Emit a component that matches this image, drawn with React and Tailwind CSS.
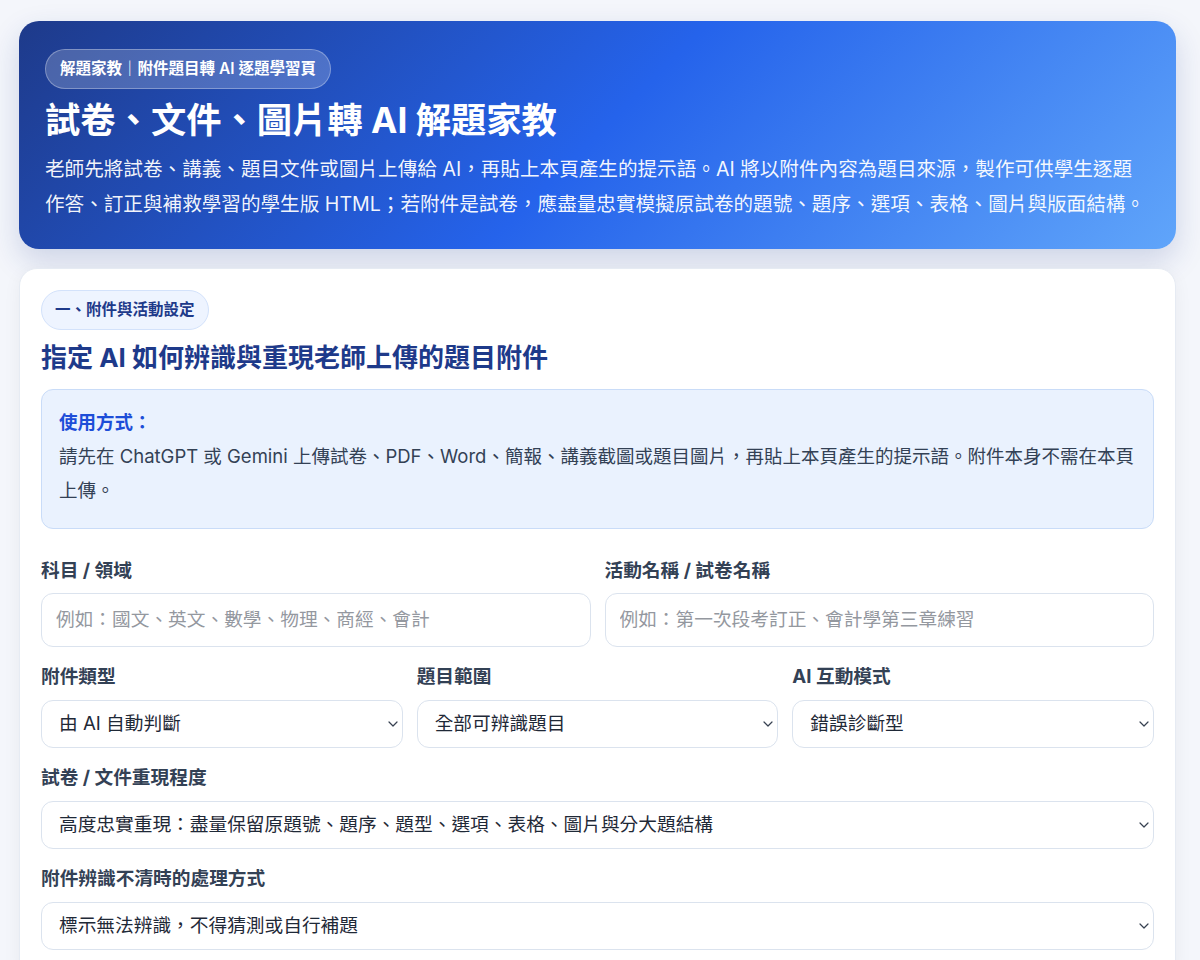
import { useState } from 'react';

const fieldLabel = 'block text-[18.7px] leading-6 font-bold text-[#334155]';

function Chevron() {
  return (
    <svg
      width="10"
      height="6"
      viewBox="0 0 10 6"
      fill="none"
      className="pointer-events-none absolute right-[5px] top-1/2 -translate-y-1/2"
    >
      <path d="M1 1l4 4 4-4" stroke="#374151" strokeWidth="1.2" strokeLinecap="round" strokeLinejoin="round" />
    </svg>
  );
}

function SelectField({ label, value, onChange, options }) {
  return (
    <div>
      <label className={`${fieldLabel} mb-[11px]`}>{label}</label>
      <div className="relative">
        <select
          value={value}
          onChange={(e) => onChange(e.target.value)}
          className="block w-full h-12 appearance-none rounded-xl border border-[#dbe3ee] bg-white pl-[17px] pr-8 text-[18.7px] text-[#1f2937] outline-none focus:border-blue-400"
        >
          {options.map((opt) => (
            <option key={opt} value={opt}>
              {opt}
            </option>
          ))}
        </select>
        <Chevron />
      </div>
    </div>
  );
}

function TextField({ label, placeholder, value, onChange }) {
  return (
    <div>
      <label className={`${fieldLabel} mb-[10px]`}>{label}</label>
      <input
        type="text"
        value={value}
        placeholder={placeholder}
        onChange={(e) => onChange(e.target.value)}
        className="block w-full h-[54px] rounded-xl border border-[#dbe3ee] bg-white px-[14px] text-[18.7px] text-[#1f2937] placeholder:text-[#94989f] outline-none focus:border-blue-400"
      />
    </div>
  );
}

export default function App() {
  const [subject, setSubject] = useState('');
  const [activity, setActivity] = useState('');
  const [fileType, setFileType] = useState('由 AI 自動判斷');
  const [scope, setScope] = useState('全部可辨識題目');
  const [mode, setMode] = useState('錯誤診斷型');
  const [fidelity, setFidelity] = useState('高度忠實重現：盡量保留原題號、題序、題型、選項、表格、圖片與分大題結構');
  const [unclear, setUnclear] = useState('標示無法辨識，不得猜測或自行補題');

  return (
    <div className="min-h-screen bg-[#f4f6fb] pl-[19px] pr-[24px] pt-[21px] pb-10 font-['Inter','Noto_Sans_CJK_TC',sans-serif]">
      {/* 頁首 */}
      <header className="rounded-[20px] bg-[linear-gradient(135deg,#1e3a8a,#2563eb_50%,#60a5fa)] pl-[26px] pr-[30px] pt-[28px] pb-[27px] text-white shadow-[0_12px_30px_rgba(30,58,138,0.18)]">
        <span className="inline-flex h-10 items-center rounded-full border border-white/30 bg-white/20 px-[14px] text-[15.5px] font-semibold">
          解題家教｜附件題目轉 AI 逐題學習頁
        </span>
        <h1 className="mt-[9px] text-[35.3px] font-bold leading-[1.3]">試卷、文件、圖片轉 AI 解題家教</h1>
        <p className="mt-[8px] text-[19.6px] leading-[35px] text-white/95">
          老師先將試卷、講義、題目文件或圖片上傳給 AI，再貼上本頁產生的提示語。AI 將以附件內容為題目來源，製作可供學生逐題作答、訂正與補救學習的學生版 HTML；若附件是試卷，應盡量忠實模擬原試卷的題號、題序、選項、表格、圖片與版面結構。
        </p>
      </header>

      {/* 一、附件與活動設定 */}
      <section className="mt-[19px] rounded-[18px] border border-[#e6ebf3] bg-white px-[21px] pt-[21px] pb-8 shadow-[0_4px_18px_rgba(15,23,42,0.05)]">
        <span className="inline-flex h-10 items-center rounded-full border border-[#d3e2fb] bg-[#eef4ff] px-[13px] text-[15.5px] font-bold text-[#1e3a8a]">
          一、附件與活動設定
        </span>
        <h2 className="mt-[10px] text-[26px] font-bold leading-[35px] text-[#1e3a8a]">
          指定 AI 如何辨識與重現老師上傳的題目附件
        </h2>

        <div className="mt-[14px] rounded-xl border border-[#c9dcf8] bg-[#eaf2fe] pl-[17px] pr-[14px] pt-[15px] pb-[21px] text-[18.5px] leading-[34px]">
          <p className="font-bold text-[#1d4ed8]">使用方式：</p>
          <p className="text-[#334155]">
            請先在 ChatGPT 或 Gemini 上傳試卷、PDF、Word、簡報、講義截圖或題目圖片，再貼上本頁產生的提示語。附件本身不需在本頁上傳。
          </p>
        </div>

        <div className="mt-[30px] grid grid-cols-2 gap-[14px]">
          <TextField
            label="科目 / 領域"
            placeholder="例如：國文、英文、數學、物理、商經、會計"
            value={subject}
            onChange={setSubject}
          />
          <TextField
            label="活動名稱 / 試卷名稱"
            placeholder="例如：第一次段考訂正、會計學第三章練習"
            value={activity}
            onChange={setActivity}
          />
        </div>

        <div className="mt-[18px] grid grid-cols-3 gap-[14px]">
          <SelectField
            label="附件類型"
            value={fileType}
            onChange={setFileType}
            options={['由 AI 自動判斷', '紙本試卷掃描', 'PDF 文件', 'Word 文件', '簡報', '講義截圖', '題目圖片']}
          />
          <SelectField
            label="題目範圍"
            value={scope}
            onChange={setScope}
            options={['全部可辨識題目', '只處理選擇題', '只處理非選擇題', '指定題號']}
          />
          <SelectField
            label="AI 互動模式"
            value={mode}
            onChange={setMode}
            options={['錯誤診斷型', '逐步引導型', '直接講解型']}
          />
        </div>

        <div className="mt-[18px] space-y-[18px]">
          <SelectField
            label="試卷 / 文件重現程度"
            value={fidelity}
            onChange={setFidelity}
            options={[
              '高度忠實重現：盡量保留原題號、題序、題型、選項、表格、圖片與分大題結構',
              '中度重現：保留題號與題目內容，版面可重新整理',
              '僅取題目內容：重新排版為學習頁',
            ]}
          />
          <SelectField
            label="附件辨識不清時的處理方式"
            value={unclear}
            onChange={setUnclear}
            options={['標示無法辨識，不得猜測或自行補題', '依上下文合理推測並標註', '略過該題']}
          />
        </div>
      </section>
    </div>
  );
}
